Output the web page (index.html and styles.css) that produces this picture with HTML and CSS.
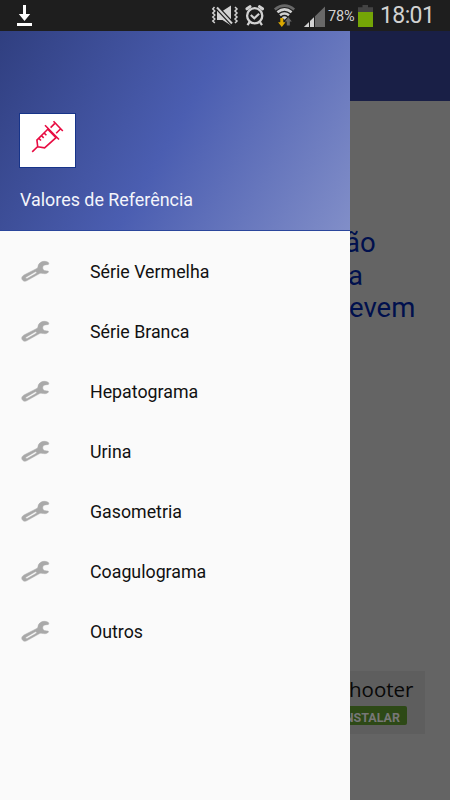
FILE: index.html
```html
<!DOCTYPE html>
<html lang="pt-BR">
<head>
<meta charset="utf-8">
<title>Valores de Referência</title>
<link rel="stylesheet" href="styles.css">
</head>
<body>
<svg class="defs" width="0" height="0">
  <symbol id="wrench" viewBox="0 0 40 32">
    <path fill="#a9a9a9" stroke="#a9a9a9" stroke-width=".5" fill-rule="evenodd" d="M33 7.2C29 5 23.6 7 23 11.5C22.8 13 22 13.4 20 14.4L9 20C6.5 21.5 6.2 23.4 7.5 25.1C8.8 26.6 10.5 26.5 12 25.6L24.5 18.6C26 17.8 27 18.2 28.5 18.6C30.6 19 32.5 18.4 33.4 17.1C33.8 16.3 33 15.8 32 16L29.2 15.5C27.6 14.5 27.2 12.3 28.3 10.7C29.2 9.8 31.5 9.8 33.4 9.4C34 8.6 33.9 7.7 33 7.2ZM11.3 21.9L19.8 17.1C21.3 16.3 22.5 17.5 21 18.5L12.7 23.2C11.1 24 9.9 22.8 11.3 21.9Z"/>
  </symbol>
</svg>
<header class="status">
  <svg class="download" viewBox="16 0 18 31"><path fill="#fff" d="M23 5h3v9h4.2L24.5 21 18.8 14H23zM17 23h15v3H17z"/></svg>
  <svg class="mute" viewBox="211 0 29 31" fill="none" stroke="#d2d2d2">
    <path fill="#d2d2d2" stroke="none" d="M217 11h5.5l8.5-5.5v20L222.500 20H217z"/>
    <path stroke="#1e1e1e" stroke-width="4.5" d="M216.500 7l16 17"/>
    <path stroke-width="2" d="M217 7.500l15 16"/>
    <path stroke-width="1.5" d="M214.500 7l-1.700 2 2 2-2 2 2 2-2 2 2 2-2 2 2 2M235 7l2 2-2 2 2 2-2 2 2 2-2 2 2 2-2 2"/>
  </svg>
  <svg class="alarm" viewBox="244 0 22 31" fill="none" stroke="#d2d2d2">
    <circle cx="254.700" cy="15.800" r="7.600" stroke-width="2.3"/>
    <path stroke-width="2.2" d="M250.800 15l3.500 3.300 4.800-4.500M249.500 22.200l-2 3M260 22.200l2 3"/>
    <path stroke-width="3" stroke-linecap="round" d="M247 8.800l3-2.200M259.500 6.600l3 2.200"/>
  </svg>
  <svg class="wifi" viewBox="273 0 24 31" fill="none">
    <path stroke="#686868" stroke-width="2.6" d="M274.800 9.400Q284.500 1.800 294.200 9.400"/>
    <path stroke="#d2d2d2" stroke-width="2.5" d="M277.400 12.300Q284.500 6.500 291.600 12.300M280 15.300Q284.500 11.800 289 15.300"/>
    <path fill="#d2d2d2" d="M281.800 17.200Q284.500 15.500 287.200 17.200L284.500 19.700z"/>
    <path fill="#dba800" d="M280.300 18h3v4.300h2.200L281.800 27l-3.700-4.700h2.200z"/>
    <path fill="#686868" d="M286.800 25.500v-4h-2l3.600-4.300 3.400 4.300h-2v4z"/>
  </svg>
  <svg class="signal" viewBox="303 0 23 31"><path fill="#686868" d="M325 6.500V27h-21z"/><path fill="#d2d2d2" d="M314 17.200V27h-10z"/><path stroke="#1e1e1e" d="M309.500 15v12M314.500 15v12"/></svg>
  <span class="percent">78%</span>
  <svg class="battery" viewBox="357 0 17 31"><path fill="#444" d="M362.500 5h5.500v2.300h5V13h-15V7.300h4.500z"/><path fill="#74a506" d="M358 12h15v15h-15z"/></svg>
  <time class="clock">18:01</time>
</header>
<div class="screen">
  <nav class="drawer">
    <div class="banner">
      <div class="logo">
        <svg viewBox="20 114 55 53" fill="none" stroke="#e80c42" stroke-width="1.6">
          <path d="M32.200 151.800l5.500-5.300-.8-6.400 10.800-10.800 8.300 8.300-11.400 10.200-6.900-1.100M45 125.300l14 14.200M53.500 121.200l9.300 9.800M50.600 127.600l4-4M56.200 133.200l4.200-4.200M38.600 138.100l2.400 2.400M41.300 135.500l2.400 2.400M44 132.900l2.400 2.400"/>
        </svg>
      </div>
      <h1>Valores de Referência</h1>
    </div>
    <ul class="menu">
      <li><svg><use href="#wrench"/></svg><span>Série Vermelha</span></li>
      <li><svg><use href="#wrench"/></svg><span>Série Branca</span></li>
      <li><svg><use href="#wrench"/></svg><span>Hepatograma</span></li>
      <li><svg><use href="#wrench"/></svg><span>Urina</span></li>
      <li><svg><use href="#wrench"/></svg><span>Gasometria</span></li>
      <li><svg><use href="#wrench"/></svg><span>Coagulograma</span></li>
      <li><svg><use href="#wrench"/></svg><span>Outros</span></li>
    </ul>
  </nav>
  <main class="content">
    <div class="toolbar"></div>
    <p class="message"><span class="first">ão</span><br>a<br><span class="last">evem</span></p>
    <aside class="ad">
      <div class="ad-title">hooter</div>
      <div class="ad-button">INSTALAR</div>
    </aside>
  </main>
</div>
</body>
</html>
```
FILE: styles.css
```css
* { box-sizing: border-box; }
body {
  margin: 0;
  width: 450px;
  height: 800px;
  overflow: hidden;
  display: flex;
  flex-direction: column;
  font-family: Roboto, sans-serif;
  background: #646464;
}
.defs { display: none; }
.status {
  display: flex;
  height: 31px;
  flex: none;
  background: #1e1e1e;
  color: #d2d2d2;
}
.status svg { height: 31px; flex: none; }
.download { width: 18px; margin-left: 16px; }
.mute { width: 29px; margin-left: 177px; }
.alarm { width: 22px; margin-left: 4px; }
.wifi { width: 24px; margin-left: 7px; }
.signal { width: 23px; margin-left: 6px; }
.percent { width: 29px; margin-left: 2px; font-size: 14.5px; line-height: 33px; letter-spacing: -0.2px; white-space: nowrap; }
.battery { width: 17px; }
.clock { margin-left: 6px; font-size: 23px; line-height: 31px; letter-spacing: -0.6px; white-space: nowrap; }
.screen { display: flex; flex: 1; min-height: 0; }
.drawer { width: 350px; flex: none; background: #fafafa; }
.banner {
  height: 200px;
  padding: 83px 20px 0;
  background: linear-gradient(120deg, #303f80, #4b5eb1 50%, #818ec8);
  border-bottom: 1px solid #2b469c;
}
.logo {
  width: 55px;
  height: 53px;
  background: #fff;
  box-shadow: 0 0 0 1px #173489;
}
.logo svg { display: block; width: 55px; height: 53px; }
h1 {
  margin: 21px 0 0;
  font-size: 17.9px;
  line-height: 24px;
  font-weight: 400;
  color: #f4f5fb;
  white-space: nowrap;
}
.menu { margin: 0; padding: 10px 0 0; list-style: none; }
.menu li {
  height: 60px;
  padding-left: 15px;
  display: flex;
  align-items: center;
  gap: 35px;
  font-size: 17.8px;
  color: #111;
}
.menu svg { width: 40px; height: 32px; }
.content { flex: 1; min-width: 0; overflow: hidden; }
.toolbar { height: 70px; background: #191f46; }
.message {
  margin: 126px 0 0 -2px;
  height: 97px;
  font-size: 27.5px;
  line-height: 32.5px;
  color: #00104d;
}
.message .first { margin-left: -3px; }
.message .last { margin-left: 1px; }
.ad {
  width: 75px;
  height: 63px;
  margin-top: 347px;
  background: #5e5e5e;
}
.ad-title {
  height: 35px;
  margin-left: -1px;
  font: 20.5px/37px "Open Sans", sans-serif;
  color: #080808;
}
.ad-button {
  width: 57px;
  height: 19px;
  padding-right: 7px;
  display: flex;
  justify-content: flex-end;
  overflow: hidden;
  background: #2d4916;
  border-radius: 0 2px 2px 0;
  color: #777;
  font-size: 12.5px;
  font-weight: 700;
  line-height: 24px;
}
```
